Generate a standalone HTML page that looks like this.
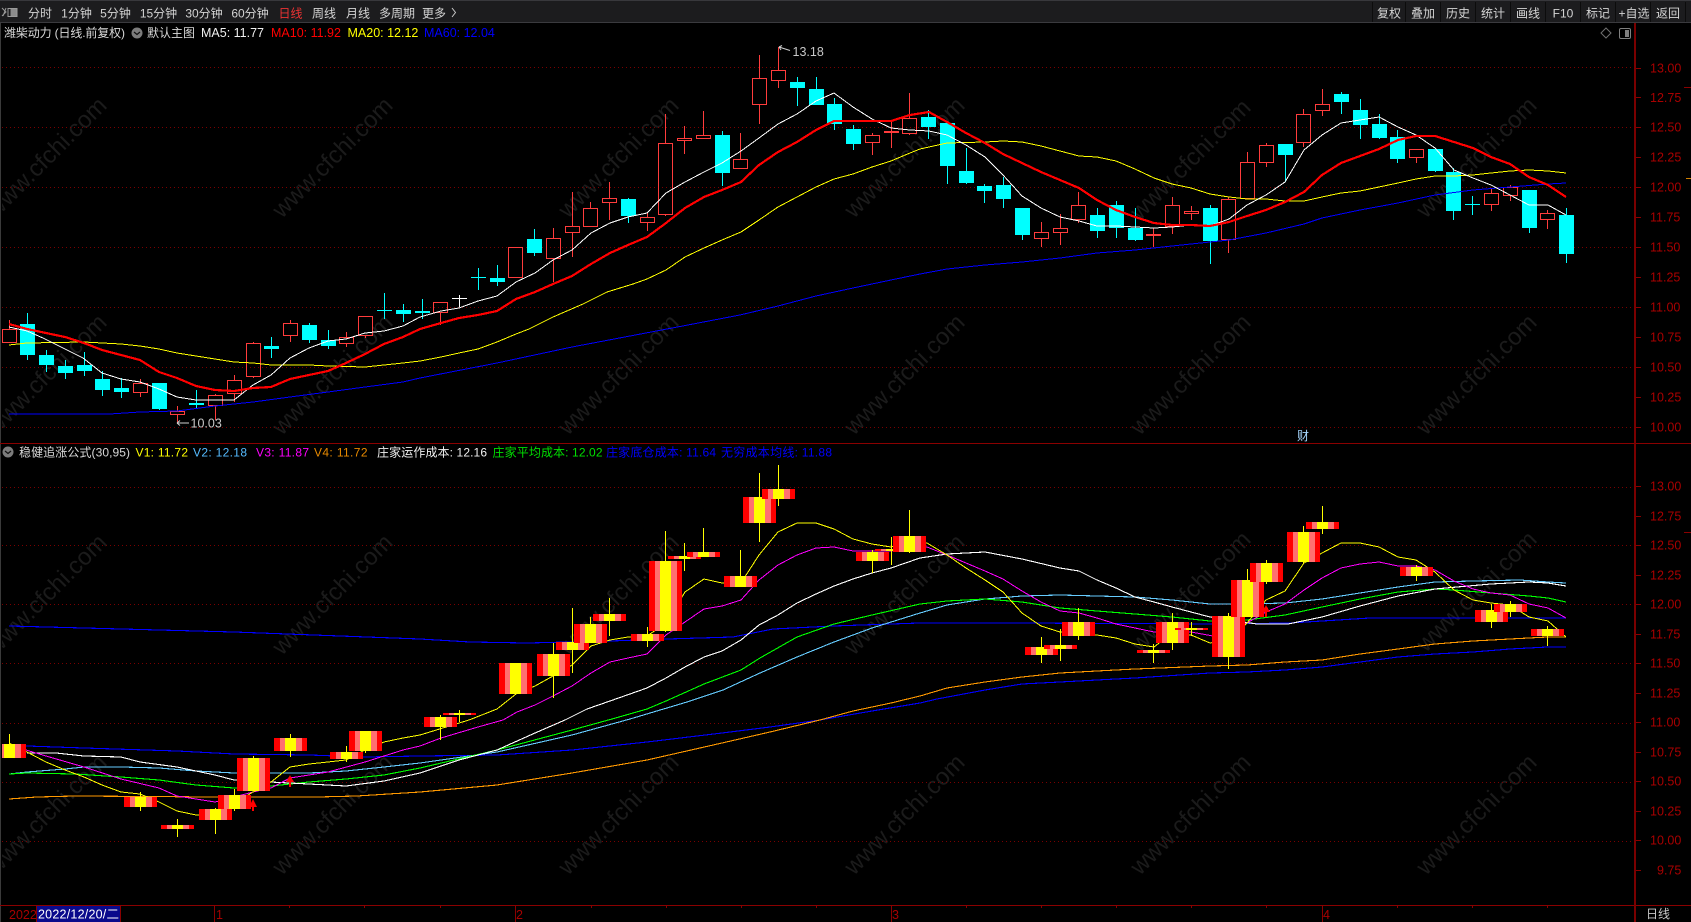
<!DOCTYPE html>
<html lang="zh">
<head>
<meta charset="utf-8">
<title>潍柴动力 日线</title>
<style>
html,body{margin:0;padding:0;background:#000;width:1691px;height:922px;overflow:hidden}
svg{display:block}
text{font-family:"Liberation Sans","Noto Sans CJK SC",sans-serif;font-size:12px}
.tb{fill:#d4d4d4;text-anchor:middle}
.sc{fill:#a80000;font-size:12.5px}
.wm{fill:#1b1b1b;font-size:24px;text-anchor:middle}
.ln{fill:none;shape-rendering:crispEdges;stroke-linejoin:round}
</style>
</head>
<body>
<svg width="1691" height="922" viewBox="0 0 1691 922" xmlns="http://www.w3.org/2000/svg">
<defs>
<linearGradient id="s" x1="0" y1="0" x2="1" y2="0">
<stop offset="0" stop-color="#f00"/><stop offset=".1818" stop-color="#f00"/>
<stop offset=".1818" stop-color="#ff7070"/><stop offset=".3333" stop-color="#ff7070"/>
<stop offset=".3333" stop-color="#ff0"/><stop offset=".6667" stop-color="#ff0"/>
<stop offset=".6667" stop-color="#ff7070"/><stop offset=".8485" stop-color="#ff7070"/>
<stop offset=".8485" stop-color="#f00"/><stop offset="1" stop-color="#f00"/>
</linearGradient>
</defs>
<rect width="1691" height="922" fill="#000"/>

<!-- watermark -->
<g transform="translate(5 5)">
<text class="wm" transform="translate(47 158) rotate(-45)">www.cfchi.com</text><text class="wm" transform="translate(333 158) rotate(-45)">www.cfchi.com</text><text class="wm" transform="translate(619 158) rotate(-45)">www.cfchi.com</text><text class="wm" transform="translate(905 158) rotate(-45)">www.cfchi.com</text><text class="wm" transform="translate(1191 160) rotate(-45)">www.cfchi.com</text><text class="wm" transform="translate(1477 158) rotate(-45)">www.cfchi.com</text>
<text class="wm" transform="translate(47 375) rotate(-45)">www.cfchi.com</text><text class="wm" transform="translate(333 375) rotate(-45)">www.cfchi.com</text><text class="wm" transform="translate(619 375) rotate(-45)">www.cfchi.com</text><text class="wm" transform="translate(905 375) rotate(-45)">www.cfchi.com</text><text class="wm" transform="translate(1191 375) rotate(-45)">www.cfchi.com</text><text class="wm" transform="translate(1477 375) rotate(-45)">www.cfchi.com</text>
<text class="wm" transform="translate(47 595) rotate(-45)">www.cfchi.com</text><text class="wm" transform="translate(333 595) rotate(-45)">www.cfchi.com</text><text class="wm" transform="translate(619 595) rotate(-45)">www.cfchi.com</text><text class="wm" transform="translate(905 595) rotate(-45)">www.cfchi.com</text><text class="wm" transform="translate(1191 592) rotate(-45)">www.cfchi.com</text><text class="wm" transform="translate(1477 592) rotate(-45)">www.cfchi.com</text>
<text class="wm" transform="translate(47 815) rotate(-45)">www.cfchi.com</text><text class="wm" transform="translate(333 815) rotate(-45)">www.cfchi.com</text><text class="wm" transform="translate(619 815) rotate(-45)">www.cfchi.com</text><text class="wm" transform="translate(905 815) rotate(-45)">www.cfchi.com</text><text class="wm" transform="translate(1191 815) rotate(-45)">www.cfchi.com</text><text class="wm" transform="translate(1477 815) rotate(-45)">www.cfchi.com</text>
</g>

<!-- grid -->
<path d="M2 67.5H1634M2 127.5H1634M2 187.5H1634M2 247.5H1634M2 307.5H1634M2 367.5H1634M2 427.5H1634M2 487.5H1634M2 545.5H1634M2 604.5H1634M2 663.5H1634M2 723.5H1634M2 782.5H1634M2 841.5H1634" stroke="#7a0000" stroke-width="1" stroke-dasharray="1 3" fill="none" shape-rendering="crispEdges"/>

<!-- upper candles -->
<g shape-rendering="crispEdges">
<path fill="#0ff" d="M20 324h15v31h-15zM39 355h15v10h-15zM58 366h15v7h-15zM77 365h15v6h-15zM95 379h15v11h-15zM114 388h15v4h-15zM152 383h15v26h-15zM189 403h15v2h-15zM264 346h15v3h-15zM302 325h15v15h-15zM321 340h15v6h-15zM377 310h15v1h-15zM396 310h15v4h-15zM415 311h15v2h-15zM471 277h15v1h-15zM490 278h15v4h-15zM527 239h15v14h-15zM621 199h15v17h-15zM715 135h15v38h-15zM790 82h15v6h-15zM809 89h15v16h-15zM827 104h15v20h-15zM846 129h15v15h-15zM921 117h15v10h-15zM940 123h15v43h-15zM959 171h15v12h-15zM977 186h15v5h-15zM996 185h15v14h-15zM1015 208h15v27h-15zM1090 215h15v16h-15zM1109 205h15v23h-15zM1128 228h15v12h-15zM1203 208h15v33h-15zM1278 144h15v11h-15zM1334 94h15v8h-15zM1353 110h15v15h-15zM1372 124h15v14h-15zM1390 137h15v22h-15zM1428 149h15v22h-15zM1446 172h15v39h-15zM1465 204h15v1h-15zM1522 190h15v38h-15zM1559 215h15v39h-15z"/>
<path stroke="#0ff" stroke-width="1" fill="none" d="M27.5 313V360M46.5 350V372M65.5 360V379M84.5 352V376M102.5 371V396M121.5 378V398M159.5 383V410M196.5 390V409M271.5 337V358M309.5 323V343M328.5 330V349M384.5 293V319M403.5 304V322M422.5 299V319M478.5 268V290M497.5 265V286M534.5 229V256M628.5 198V223M722.5 131V186M797.5 77V106M816.5 77V105M834.5 98V130M853.5 125V150M928.5 110V139M947.5 123V184M966.5 148V184M984.5 184V203M1003.5 177V208M1022.5 208V240M1097.5 208V238M1116.5 201V238M1135.5 208V241M1210.5 205V264M1285.5 144V182M1341.5 92V114M1360.5 99V139M1379.5 114V139M1397.5 130V163M1435.5 149V172M1453.5 168V220M1472.5 196V215M1529.5 190V233M1566.5 208V263"/>
<path stroke="#ff3c3c" stroke-width="1" fill="none" d="M2.5 329.5h14v13h-14zM133.5 383.5h14v9h-14zM170.5 411.5h14v3h-14zM208.5 395.5h14v10h-14zM227.5 380.5h14v13h-14zM246.5 343.5h14v33h-14zM283.5 323.5h14v12h-14zM339.5 337.5h14v6h-14zM358.5 316.5h14v19h-14zM433.5 302.5h14v10h-14zM508.5 247.5h14v30h-14zM546.5 238.5h14v20h-14zM565.5 226.5h14v6h-14zM583.5 208.5h14v18h-14zM602.5 198.5h14v4h-14zM640.5 217.5h14v5h-14zM658.5 143.5h14v71h-14zM677.5 138.5h14v2h-14zM696.5 135.5h14v3h-14zM733.5 159.5h14v9h-14zM752.5 78.5h14v26h-14zM771.5 70.5h14v10h-14zM865.5 135.5h14v7h-14zM902.5 118.5h14v15h-14zM1034.5 232.5h14v6h-14zM1053.5 228.5h14v4h-14zM1071.5 205.5h14v14h-14zM1165.5 205.5h14v21h-14zM1184.5 211.5h14v2h-14zM1221.5 199.5h14v40h-14zM1240.5 162.5h14v36h-14zM1259.5 145.5h14v17h-14zM1296.5 114.5h14v28h-14zM1315.5 104.5h14v6h-14zM1409.5 149.5h14v8h-14zM1484.5 193.5h14v11h-14zM1503.5 187.5h14v8h-14zM1540.5 213.5h14v6h-14z"/>
<path stroke="#ff3c3c" stroke-width="1" fill="none" d="M9.5 320V329M140.5 379V383M140.5 393V397M177.5 406V411M177.5 415V424M215.5 394V395M215.5 406V420M234.5 375V380M234.5 394V402M253.5 342V343M253.5 377V378M290.5 320V323M290.5 336V342M346.5 332V337M346.5 344V347M365.5 336V338M440.5 313V325M553.5 228V238M553.5 259V282M572.5 192V226M572.5 233V257M590.5 202V208M609.5 182V198M609.5 203V220M647.5 212V217M647.5 223V231M665.5 114V143M665.5 215V216M684.5 126V138M684.5 141V154M703.5 111V135M740.5 133V159M759.5 55V78M759.5 105V124M778.5 47V70M778.5 81V88M872.5 133V135M872.5 143V155M909.5 93V118M909.5 134V135M1041.5 222V232M1041.5 239V247M1060.5 214V228M1060.5 233V245M1078.5 192V205M1078.5 220V223M1172.5 197V205M1172.5 227V234M1191.5 206V211M1191.5 214V220M1228.5 197V199M1228.5 240V253M1247.5 152V162M1266.5 143V145M1266.5 163V167M1303.5 109V114M1303.5 143V147M1322.5 89V104M1322.5 111V116M1416.5 158V163M1491.5 189V193M1491.5 205V211M1510.5 185V187M1510.5 196V201M1547.5 210V213M1547.5 220V229M891.5 120V148M1153.5 228V247"/>
<path fill="#ff3c3c" d="M884 131h15v2h-15zM1146 234h15v2h-15z"/>
<path fill="#fff" d="M452 298h15v1h-15zM459 295h1v12h-1z"/>
</g>

<!-- upper MAs -->
<polyline class="ln" stroke="#0000ff" stroke-width="1" points="9,414 110,414 140,412 177,411 215,406 253,402 290,397 328,392 365,387 403,382 420,378 497,363 572,347 667,329 740,315 778,306 816,296 853,288 891,280 920,274 947,269 985,265 1022,262 1060,258 1097,253 1135,250 1172,246 1210,242 1229,240 1266,233 1304,224 1322,218 1360,210 1398,203 1435,195 1473,190 1510,187 1548,184 1566,183"/>
<polyline class="ln" stroke="#ffff00" stroke-width="1" points="9,345 27,343 84,342 121,344 140,346 159,349 177,353 196,356 215,359 234,362 253,363 271,365 309,365 328,366 365,367 384,365 403,363 420,361 441,357 459,353 478,349 497,342 516,334 529,329 553,317 583,304 607,292 633,284 647,279 666,270 685,257 704,248 722,240 741,232 759,220 778,207 797,197 816,187 834,179 853,174 872,167 891,161 910,153 920,149 929,147 947,143 985,142 1003,141 1022,142 1041,146 1060,151 1079,156 1097,157 1116,161 1135,169 1154,178 1172,184 1191,188 1210,194 1229,197 1247,199 1266,199 1285,201 1304,201 1322,197 1341,193 1360,191 1379,187 1398,183 1416,179 1435,176 1454,176 1473,175 1491,173 1510,171 1529,170 1548,171 1566,173"/>
<polyline class="ln" stroke="#ffffff" stroke-width="1" points="9,327 27,331 43,338 63,348 83,358 102,373 121,379 140,382 159,389 177,397 196,400 215,400 234,400 253,385 271,375 290,358 309,348 328,341 346,339 365,333 384,331 403,326 420,317 441,311 459,308 478,301 497,296 516,282 535,273 553,260 572,250 591,233 610,223 628,217 647,213 666,193 685,182 704,172 722,163 741,151 759,138 778,124 797,114 816,101 834,93 853,107 872,119 891,128 910,130 929,131 947,135 966,145 985,157 1003,175 1022,196 1041,208 1060,217 1079,221 1097,226 1116,226 1135,227 1154,228 1172,227 1191,225 1210,226 1229,219 1247,205 1266,195 1285,182 1304,150 1322,135 1341,123 1360,120 1379,117 1398,127 1416,135 1435,148 1454,170 1473,178 1491,185 1510,195 1529,205 1548,205 1566,215"/>
<polyline class="ln" stroke="#ff0000" stroke-width="2.2" points="9,324 27,329 46,333 65,337 84,343 102,350 121,355 140,360 159,372 177,378 196,386 215,390 234,391 253,388 271,387 290,379 309,375 328,371 346,363 365,354 384,344 403,337 420,329 441,323 459,318 478,315 497,311 516,299 535,292 553,284 572,276 591,264 610,253 628,245 647,237 666,223 685,208 704,197 722,190 741,182 759,165 778,152 797,142 816,130 834,121 853,121 872,121 891,121 910,115 929,112 947,122 966,133 985,143 1003,154 1022,163 1041,172 1060,180 1079,188 1097,200 1116,210 1135,217 1154,223 1172,225 1191,225 1210,226 1229,222 1247,216 1266,210 1285,202 1304,192 1322,175 1341,163 1360,156 1379,149 1398,140 1416,136 1435,136 1454,142 1473,148 1491,157 1510,164 1529,177 1548,185 1566,197"/>

<!-- extremes -->
<path d="M779 47L790 50.5M779 47l3-1.5M779 47l2 3M177 423H189M177 423l3-2.5M177 423l3 2.5" stroke="#cfcfcf" stroke-width="1" fill="none"/>
<text x="792.5" y="56" fill="#c8c8c8" style="font-size:12.5px">13.18</text>
<text x="190.5" y="427.5" fill="#c8c8c8" style="font-size:12.5px">10.03</text>
<text x="1297" y="440" fill="#a8d8ff" style="font-size:12px">财</text>

<!-- lower MAs -->
<polyline class="ln" stroke="#0000ff" stroke-width="1.1" points="9,626 234,632 420,639 470,642 527,643 610,641 667,639 733,637 773,629 833,626 920,623 957,623 1013,623 1220,624 1290,623 1370,618 1566,618"/>
<polyline class="ln" stroke="#0000ff" stroke-width="1.1" points="9,746 27,746 84,748 177,751 234,754 309,755 365,757 420,756 497,755 572,750 647,742 722,733 770,727 820,720 872,711 920,703 937,699 985,690 1022,684 1060,682 1097,680 1135,678 1210,673 1247,672 1285,670 1322,667 1360,662 1398,657 1435,654 1473,652 1510,649 1548,647 1566,647"/>
<polyline class="ln" stroke="#ff9900" stroke-width="1.1" points="9,799 37,797 75,796 217,797 317,797 357,796 420,792 497,785 572,773 647,760 722,743 770,732 820,720 853,711 891,703 920,696 947,688 985,682 1022,677 1060,673 1097,671 1135,669 1210,666 1247,665 1285,662 1322,660 1360,654 1398,649 1435,644 1473,641 1510,639 1548,637 1566,637"/>
<polyline class="ln" stroke="#66ccff" stroke-width="1.1" points="9,774 27,772 65,769 84,767 121,767 159,768 196,771 234,773 271,773 309,773 346,771 384,767 420,763 497,752 572,735 630,719 687,702 723,690 760,673 797,657 834,642 872,628 920,613 947,605 985,599 1022,596 1060,595 1097,596 1135,597 1172,600 1210,604 1247,604 1285,603 1322,599 1360,593 1398,587 1435,582 1473,581 1520,580 1548,582 1566,583"/>
<polyline class="ln" stroke="#00ff00" stroke-width="1.1" points="9,774 27,773 75,774 121,777 159,780 196,785 234,788 271,786 309,782 346,779 384,775 420,768 497,750 572,730 612,719 647,709 666,701 704,684 741,670 760,658 797,637 834,624 872,615 920,604 947,601 985,599 1022,602 1060,608 1097,611 1135,614 1172,617 1210,621 1247,620 1285,615 1322,607 1360,599 1398,592 1435,589 1454,590 1491,593 1529,596 1548,598 1566,602"/>
<polyline class="ln" stroke="#ffffff" stroke-width="1.1" points="27,753 56,753 84,756 121,757 140,762 177,767 215,775 234,780 270,782 309,784 346,786 384,781 420,773 459,760 497,750 535,733 565,720 587,709 610,701 647,688 666,678 685,667 704,657 722,651 741,640 759,625 778,615 797,603 816,594 834,586 853,579 872,573 891,568 920,558 947,554 985,552 1022,559 1060,568 1079,571 1097,580 1116,588 1135,597 1154,602 1172,607 1191,612 1210,617 1257,624 1288,624 1322,617 1360,606 1398,596 1435,589 1457,587 1491,584 1529,582 1548,583 1566,586"/>
<polyline class="ln" stroke="#ff00ff" stroke-width="1" points="26,750 46,756 84,767 121,779 159,788 177,796 196,799 215,802 253,792 271,788 290,778 328,772 365,762 403,750 420,746 441,738 478,727 503,720 517,712 535,705 553,696 572,686 591,673 610,662 628,658 647,654 666,635 685,622 704,609 722,606 741,600 759,580 778,565 797,555 816,548 834,547 853,551 872,551 891,551 910,548 927,547 947,555 985,571 1003,579 1022,591 1041,602 1060,611 1079,613 1097,618 1116,624 1135,628 1154,632 1191,632 1213,636 1247,623 1266,612 1285,604 1304,590 1322,578 1341,568 1360,564 1379,562 1398,566 1416,566 1435,570 1454,581 1473,589 1491,593 1510,595 1529,604 1548,608 1566,618"/>
<polyline class="ln" stroke="#ffff00" stroke-width="1" points="9,743 27,752 46,762 65,770 84,777 102,785 121,792 140,794 159,802 177,811 196,815 215,815 253,792 271,782 290,767 309,764 328,762 346,760 365,750 384,742 403,738 420,735 469,720 497,709 516,694 535,686 553,676 572,665 591,646 610,640 628,637 647,636 666,623 685,592 704,579 722,583 741,583 759,555 778,532 797,523 816,523 834,529 853,539 872,544 891,547 910,543 927,543 947,555 966,568 985,580 1003,592 1022,613 1041,626 1060,632 1079,633 1097,635 1116,638 1135,644 1154,647 1172,633 1191,635 1210,643 1229,640 1247,623 1266,600 1285,591 1304,563 1322,553 1341,543 1360,543 1379,547 1398,557 1416,560 1435,572 1454,590 1473,600 1491,603 1510,605 1529,617 1548,621 1566,637"/>

<!-- lower candles -->
<g shape-rendering="crispEdges" fill="url(#s)">
<rect x="-7" y="744" width="33" height="14"/><rect x="124" y="797" width="33" height="10"/><rect x="161" y="825" width="33" height="4"/><rect x="199" y="809" width="33" height="11"/><rect x="218" y="795" width="33" height="14"/><rect x="237" y="758" width="33" height="33"/><rect x="274" y="738" width="33" height="13"/><rect x="330" y="752" width="33" height="7"/><rect x="349" y="731" width="33" height="20"/><rect x="424" y="717" width="33" height="10"/><rect x="443" y="713" width="33" height="2"/><rect x="499" y="663" width="33" height="31"/><rect x="537" y="654" width="33" height="22"/><rect x="556" y="642" width="33" height="8"/><rect x="574" y="624" width="33" height="19"/><rect x="593" y="614" width="33" height="7"/><rect x="631" y="634" width="33" height="7"/><rect x="649" y="561" width="33" height="70"/><rect x="668" y="556" width="33" height="3"/><rect x="687" y="552" width="33" height="5"/><rect x="724" y="576" width="33" height="11"/><rect x="743" y="497" width="33" height="26"/><rect x="762" y="489" width="33" height="10"/><rect x="856" y="552" width="33" height="9"/><rect x="875" y="549" width="33" height="2"/><rect x="893" y="536" width="33" height="16"/><rect x="1025" y="647" width="33" height="8"/><rect x="1044" y="645" width="33" height="4"/><rect x="1062" y="622" width="33" height="14"/><rect x="1137" y="650" width="33" height="3"/><rect x="1156" y="622" width="33" height="21"/><rect x="1175" y="628" width="33" height="2"/><rect x="1212" y="616" width="33" height="41"/><rect x="1231" y="580" width="33" height="37"/><rect x="1250" y="563" width="33" height="19"/><rect x="1287" y="532" width="33" height="30"/><rect x="1306" y="522" width="33" height="7"/><rect x="1400" y="567" width="33" height="9"/><rect x="1475" y="610" width="33" height="12"/><rect x="1494" y="604" width="33" height="8"/><rect x="1531" y="629" width="33" height="7"/>
</g>
<path shape-rendering="crispEdges" stroke="#ff0" stroke-width="1" fill="none" d="M9.5 734V744M140.5 792V811M177.5 819V837M215.5 808V834M234.5 789V811M253.5 756V791M290.5 734V757M346.5 746V762M365.5 751V753M440.5 715V740M459.5 710V722M553.5 643V698M572.5 608V673M590.5 617V624M609.5 598V636M647.5 627V647M665.5 531V632M684.5 543V571M703.5 528V557M740.5 550V587M759.5 473V542M778.5 465V506M872.5 550V573M891.5 537V565M909.5 510V553M1041.5 637V663M1060.5 629V661M1078.5 608V640M1153.5 644V663M1172.5 613V650M1191.5 622V636M1228.5 613V669M1247.5 569V617M1266.5 560V584M1303.5 526V564M1322.5 506V534M1416.5 565V581M1491.5 604V628M1510.5 601V617M1547.5 626V646"/>
<!-- arrows -->
<path fill="#f00" shape-rendering="crispEdges" d="M253 799l4 8h-3v4h-2v-4h-3zM290 775l4 7h-3v5h-2v-5h-3zM1266 605l4 7h-3v5h-2v-5h-3z"/>

<!-- left edge -->
<rect x="0" y="23" width="2" height="899" fill="#000"/>
<rect x="0" y="23" width="1" height="899" fill="#3a3a3a"/>

<!-- frame -->
<g shape-rendering="crispEdges">
<rect x="0" y="443" width="1691" height="1" fill="#8a0000"/>
<rect x="0" y="905" width="1691" height="1" fill="#8a0000"/>
<rect x="1634" y="23" width="2" height="899" fill="#7a0000"/>
<path stroke="#8a0000" stroke-width="1" d="M1636 68.5H1641M1636 97.5H1641M1636 127.5H1641M1636 157.5H1641M1636 187.5H1641M1636 217.5H1641M1636 247.5H1641M1636 277.5H1641M1636 307.5H1641M1636 337.5H1641M1636 367.5H1641M1636 397.5H1641M1636 427.5H1641M1636 486.5H1641M1636 516.5H1641M1636 545.5H1641M1636 575.5H1641M1636 604.5H1641M1636 634.5H1641M1636 663.5H1641M1636 693.5H1641M1636 722.5H1641M1636 752.5H1641M1636 781.5H1641M1636 811.5H1641M1636 840.5H1641M1636 870.5H1641M1684 87.5H1691M1684 532.5H1691"/>
<path stroke="#d08000" stroke-width="1" d="M1686 178.5H1691"/>
<path stroke="#8a0000" stroke-width="1" d="M214.5 905V922M515.5 905V922M891.5 905V922M1322.5 905V922M36.5 905V922M120.5 905V922M289.5 905V908M364.5 905V908M440.5 905V908M591.5 905V908M666.5 905V908M741.5 905V908M816.5 905V908M966.5 905V908M1041.5 905V908M1116.5 905V908M1191.5 905V908M1266.5 905V908M1397.5 905V908M1472.5 905V908M1547.5 905V908"/>
</g>

<!-- scale labels -->
<g>
<text class="sc" x="1650" y="72.5">13.00</text><text class="sc" x="1650" y="102">12.75</text><text class="sc" x="1650" y="131.5">12.50</text><text class="sc" x="1650" y="161.5">12.25</text><text class="sc" x="1650" y="191.5">12.00</text><text class="sc" x="1650" y="221.5">11.75</text><text class="sc" x="1650" y="251.5">11.50</text><text class="sc" x="1650" y="281.5">11.25</text><text class="sc" x="1650" y="311.5">11.00</text><text class="sc" x="1650" y="341.5">10.75</text><text class="sc" x="1650" y="371.5">10.50</text><text class="sc" x="1650" y="401.5">10.25</text><text class="sc" x="1650" y="431.5">10.00</text>
<text class="sc" x="1650" y="490.5">13.00</text><text class="sc" x="1650" y="520.5">12.75</text><text class="sc" x="1650" y="549.5">12.50</text><text class="sc" x="1650" y="579.5">12.25</text><text class="sc" x="1650" y="608.5">12.00</text><text class="sc" x="1650" y="638.5">11.75</text><text class="sc" x="1650" y="667.5">11.50</text><text class="sc" x="1650" y="697.5">11.25</text><text class="sc" x="1650" y="726.5">11.00</text><text class="sc" x="1650" y="756.5">10.75</text><text class="sc" x="1650" y="785.5">10.50</text><text class="sc" x="1650" y="815.5">10.25</text><text class="sc" x="1650" y="844.5">10.00</text><text class="sc" x="1657" y="874.5">9.75</text>
</g>

<!-- toolbar -->
<rect x="0" y="0" width="1691" height="22" fill="#1c1c1e" shape-rendering="crispEdges"/>
<rect x="0" y="0" width="1691" height="1" fill="#38383c" shape-rendering="crispEdges"/>
<rect x="0" y="22" width="1691" height="1" fill="#3a3a3e" shape-rendering="crispEdges"/>
<path stroke="#0c0c0c" stroke-width="1" shape-rendering="crispEdges" d="M1372.5 2V22M1405.5 2V22M1440.5 2V22M1475.5 2V22M1510.5 2V22M1545.5 2V22M1580.5 2V22M1615.5 2V22M1650.5 2V22M1685.5 2V22"/>
<path d="M2 8l4 4-4 4M6 8l-3 8" stroke="#9a9a9a" stroke-width="1" fill="none"/>
<rect x="8" y="8.5" width="9" height="8" fill="#8c8c8c" stroke="#9a9a9a"/>
<rect x="8.5" y="9" width="2" height="7" fill="#1c1c1e"/>
<g>
<text class="tb" x="40" y="17.5">分时</text>
<text class="tb" x="76.5" y="17.5">1分钟</text>
<text class="tb" x="115.5" y="17.5">5分钟</text>
<text class="tb" x="158.5" y="17.5">15分钟</text>
<text class="tb" x="204" y="17.5">30分钟</text>
<text class="tb" x="250" y="17.5">60分钟</text>
<text class="tb" x="290.5" y="17.5" style="fill:#ee3333">日线</text>
<text class="tb" x="324" y="17.5">周线</text>
<text class="tb" x="358" y="17.5">月线</text>
<text class="tb" x="397" y="17.5">多周期</text>
<text class="tb" x="434" y="17.5">更多</text>
<path d="M452 8l3.5 4.5-3.5 4.5" stroke="#c8c8c8" stroke-width="1" fill="none"/>
<text class="tb" x="1389" y="17.5">复权</text>
<text class="tb" x="1423" y="17.5">叠加</text>
<text class="tb" x="1458" y="17.5">历史</text>
<text class="tb" x="1493" y="17.5">统计</text>
<text class="tb" x="1528" y="17.5">画线</text>
<text class="tb" x="1563" y="17.5">F10</text>
<text class="tb" x="1598" y="17.5">标记</text>
<text class="tb" x="1634" y="17.5">+自选</text>
<text class="tb" x="1668" y="17.5">返回</text>
</g>

<!-- upper info -->
<text x="4" y="37" fill="#d8d8d8" textLength="121" lengthAdjust="spacing">潍柴动力 (日线.前复权)</text>
<circle cx="137" cy="33" r="5.5" fill="#7c7c7c"/>
<path d="M134 32l3 2.5 3-2.5" stroke="#111" stroke-width="1.2" fill="none"/>
<text x="147" y="37" fill="#d8d8d8">默认主图</text>
<text x="201" y="37" fill="#f0f0f0" style="font-size:12.5px">MA5: 11.77</text>
<text x="271" y="37" fill="#ff0000" style="font-size:12.5px">MA10: 11.92</text>
<text x="347.5" y="37" fill="#ffff00" style="font-size:12.5px">MA20: 12.12</text>
<text x="424" y="37" fill="#0000ff" style="font-size:12.5px">MA60: 12.04</text>
<path d="M1606 28l5 5-5 5-5-5z" stroke="#707070" stroke-width="1" fill="none"/>
<rect x="1619.5" y="28.5" width="11" height="10" rx="1.5" fill="none" stroke="#808080"/>
<rect x="1625" y="30" width="4" height="7" fill="#808080"/>

<!-- lower info -->
<circle cx="8" cy="452" r="5.5" fill="#7c7c7c"/>
<path d="M5 451l3 2.5 3-2.5" stroke="#111" stroke-width="1.2" fill="none"/>
<text x="19" y="456.5" fill="#d8d8d8" textLength="111" lengthAdjust="spacing">稳健追涨公式(30,95)</text>
<text x="135.5" y="456.5" fill="#ffff00" textLength="52.5">V1: 11.72</text>
<text x="193" y="456.5" fill="#55bbff" textLength="54">V2: 12.18</text>
<text x="256" y="456.5" fill="#ff00ff" textLength="53">V3: 11.87</text>
<text x="314" y="456.5" fill="#e88a00" textLength="53.5">V4: 11.72</text>
<text x="377" y="456.5" fill="#f0f0f0" textLength="110">庄家运作成本: 12.16</text>
<text x="492.5" y="456.5" fill="#00e000" textLength="110">庄家平均成本: 12.02</text>
<text x="606" y="456.5" fill="#0000ff" textLength="110">庄家底仓成本: 11.64</text>
<text x="721" y="456.5" fill="#0000ff" textLength="111">无穷成本均线: 11.88</text>

<!-- bottom axis -->
<text x="9" y="919" fill="#a80000" style="font-size:12.5px">2022</text>
<rect x="37" y="906" width="83" height="16" fill="#0a0a8c"/>
<text x="38" y="918.5" fill="#ffffff" style="font-size:12.5px" textLength="81">2022/12/20/二</text>
<text x="216" y="919" fill="#a80000" style="font-size:12.5px">1</text>
<text x="516" y="919" fill="#a80000" style="font-size:12.5px">2</text>
<text x="892" y="919" fill="#a80000" style="font-size:12.5px">3</text>
<text x="1323" y="919" fill="#a80000" style="font-size:12.5px">4</text>
<text x="1646" y="918" fill="#c8c8c8">日线</text>
</svg>
</body>
</html>
